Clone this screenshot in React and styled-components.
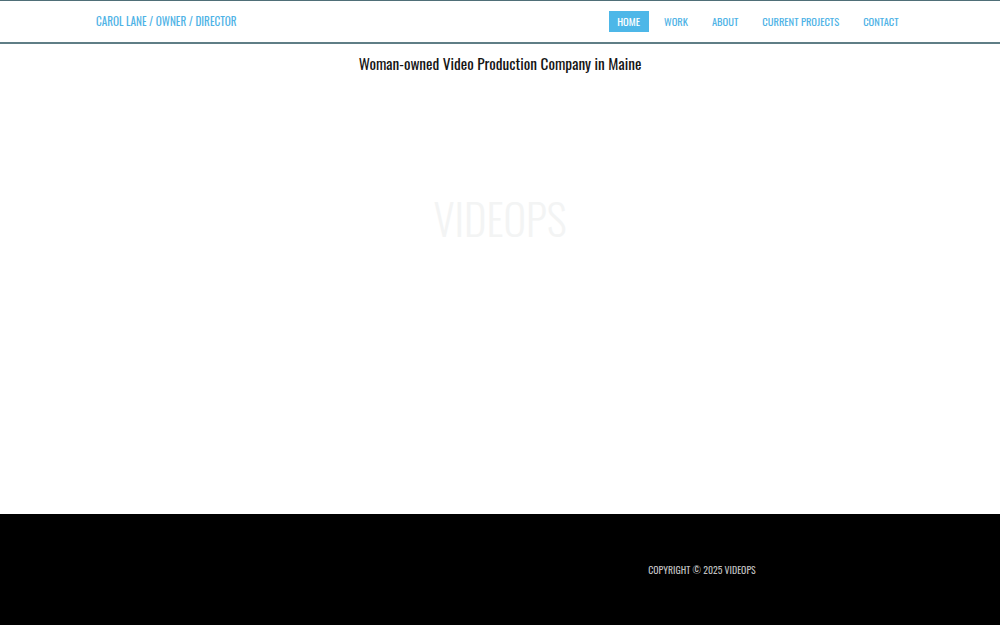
import React from "react";
import styled, { createGlobalStyle } from "styled-components";

const Global = createGlobalStyle`
  html, body { margin: 0; padding: 0; background: #fff; }
  body { font-family: Oswald, "Roboto Condensed", "DejaVu Sans Condensed", sans-serif; }
  #root { min-height: 625px; display: flex; flex-direction: column; }
`;

const Header = styled.header`
  height: 40px;
  border-top: 1px solid #4f6f78;
  border-bottom: 2px solid #5f7e86;
  display: flex;
  align-items: center;
  justify-content: space-between;
  padding: 0 93px 1px 96px;
`;

const Brand = styled.a`
  color: #4fb3e6;
  font-size: 11.2px;
  font-weight: 400;
  text-transform: uppercase;
  text-decoration: none;
`;

const Nav = styled.nav`
  display: flex;
  gap: 7px;
`;

const NavItem = styled.a`
  display: block;
  padding: 0 8.5px;
  height: 21px;
  line-height: 21px;
  font-size: 10.5px;
  font-weight: 400;
  text-transform: uppercase;
  text-decoration: none;
  color: ${(p) => (p.$active ? "#fff" : "#4fb3e6")};
  background: ${(p) => (p.$active ? "#4db7e8" : "transparent")};
`;

const Main = styled.main`
  flex: 0 0 470px;
  display: flex;
  flex-direction: column;
  align-items: center;
`;

const Title = styled.h1`
  margin: 7px 0 0;
  font-size: 15.3px;
  font-weight: 400;
  color: #151515;
  line-height: 24px;
`;

const Hero = styled.div`
  margin-top: 115px;
  font-size: 43px;
  font-weight: 300;
  line-height: 56px;
  color: #f3f4f4;
`;

const Footer = styled.footer`
  flex: 1;
  background: #000;
  display: grid;
  grid-template-columns: 1fr 1fr;
  padding: 0 96px;
  align-items: center;
`;

const Copy = styled.p`
  grid-column: 2;
  margin: 0;
  text-align: center;
  text-transform: uppercase;
  color: #bdbdbd;
  font-size: 9.8px;
`;

export default function App() {
  return (
    <>
      <Global />
      <Header>
        <Brand href="#">Carol Lane / Owner / Director</Brand>
        <Nav>
          <NavItem href="#" $active>Home</NavItem>
          <NavItem href="#">Work</NavItem>
          <NavItem href="#">About</NavItem>
          <NavItem href="#">Current Projects</NavItem>
          <NavItem href="#">Contact</NavItem>
        </Nav>
      </Header>
      <Main>
        <Title>Woman-owned Video Production Company in Maine</Title>
        <Hero>VIDEOPS</Hero>
      </Main>
      <Footer>
        <Copy>Copyright © 2025 VideOps</Copy>
      </Footer>
    </>
  );
}
